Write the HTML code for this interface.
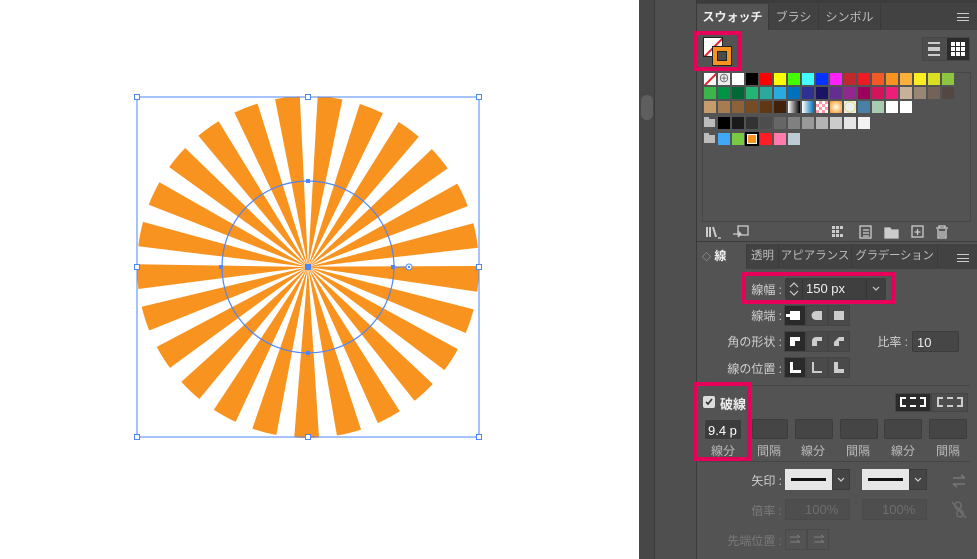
<!DOCTYPE html>
<html><head><meta charset="utf-8"><style>
*{margin:0;padding:0;box-sizing:border-box}
body{width:977px;height:559px;overflow:hidden;background:#fff;position:relative;font-family:"Liberation Sans","Noto Sans CJK JP",sans-serif;font-size:12px;color:#d6d6d6}
.a{position:absolute}
.sw{position:absolute;width:14px;height:14px;border:1px solid #535353}
.lbl{position:absolute;font-size:12px;color:#d0d0d0;text-align:right}
.btn{position:absolute;width:22px;height:21px;background:#4a4a4a;border:1px solid #454545}
.btn.on{background:#2a2a2a}
.in{position:absolute;background:#454545;border:1px solid #3c3c3c;border-radius:2px}
.pink{position:absolute;border:4px solid #e6005a}
.tab{position:absolute;height:24px;line-height:24px;font-size:11.5px;color:#bdbdbd;border-right:1px solid #3a3a3a;text-align:center;overflow:hidden;white-space:nowrap}
</style></head><body>
<svg class="a" style="left:0;top:0" width="640" height="559">
<circle cx="308" cy="267" r="85.5" fill="none" stroke="#f7931e" stroke-width="171" pathLength="25" stroke-dasharray="0.58 0.42"/>
<rect x="137" y="97" width="342" height="340" fill="none" stroke="#4f86f7" stroke-width="1"/>
<circle cx="308" cy="267" r="86" fill="none" stroke="#4f86f7" stroke-width="1.2"/>
<g fill="#fff" stroke="#4f86f7">
<rect x="134.5" y="94.5" width="5" height="5"/><rect x="305.5" y="94.5" width="5" height="5"/><rect x="476.5" y="94.5" width="5" height="5"/>
<rect x="134.5" y="264.5" width="5" height="5"/><rect x="476.5" y="264.5" width="5" height="5"/>
<rect x="134.5" y="434.5" width="5" height="5"/><rect x="305.5" y="434.5" width="5" height="5"/><rect x="476.5" y="434.5" width="5" height="5"/>
</g>
<g fill="#4f86f7"><rect x="306" y="179" width="4" height="4"/><rect x="306" y="351" width="4" height="4"/><rect x="219" y="265" width="4" height="4"/><rect x="391" y="265" width="4" height="4"/><rect x="305" y="264" width="6" height="6"/></g>
<line x1="395" y1="267" x2="406" y2="267" stroke="#4f86f7"/>
<circle cx="409" cy="267" r="3" fill="#fff" stroke="#4f86f7"/><circle cx="409" cy="267" r="1.2" fill="#4f86f7"/>
</svg>
<div class="a" style="left:639px;top:0;width:16px;height:559px;background:#474747;border-right:1px solid #393939"></div>
<div class="a" style="left:641px;top:95px;width:12px;height:25px;background:#5e5e5e;border-radius:6px"></div>
<div class="a" style="left:655px;top:0;width:42px;height:559px;background:#4f4f4f;border-right:1px solid #393939"></div>
<div class="a" style="left:697px;top:0;width:280px;height:559px;background:#535353"></div>
<div class="a" style="left:697px;top:0;width:280px;height:3px;background:#3c3c3c"></div>
<div class="a" style="left:697px;top:3px;width:280px;height:27px;background:#424242"></div>
<div class="tab" style="left:697px;top:4px;width:72px;height:26px;line-height:26px;background:#535353;color:#f0f0f0;font-weight:bold;font-size:12px">スウォッチ</div>
<div class="tab" style="left:769px;top:4px;width:50px;height:26px;line-height:26px;font-size:12px">ブラシ</div>
<div class="tab" style="left:819px;top:4px;width:62px;height:26px;line-height:26px;font-size:12px">シンボル</div>
<div class="a" style="left:957px;top:13px;width:12px;height:8px;border-top:1px solid #ccc;border-bottom:1px solid #ccc"><div style="margin-top:2.5px;border-top:1px solid #ccc"></div></div>
<div class="a" style="left:703px;top:37px;width:20px;height:20px;background:#fff;border:1px solid #222;overflow:hidden"><div style="position:absolute;left:-5px;top:8px;width:30px;height:2px;background:#e8202a;transform:rotate(-45deg)"></div></div>
<div class="a" style="left:712px;top:46px;width:20px;height:20px;background:#f7931e;border:1px solid #222"><div style="position:absolute;left:4px;top:4px;width:10px;height:10px;background:#4a4a4a;border:1px solid #222"></div></div>
<div class="pink" style="left:694px;top:31px;width:47px;height:40px"></div>
<div class="a" style="left:922px;top:37px;width:48px;height:24px;border:1px solid #464646;background:#4d4d4d"></div>
<div class="a" style="left:928px;top:42px;width:12px;height:14px;border-top:2px solid #ccc;border-bottom:2px solid #ccc"><div style="margin-top:3px;height:4px;border-top:2px solid #ccc;border-bottom:2px solid #ccc"></div></div>
<div class="a" style="left:947px;top:38px;width:22px;height:22px;background:#2b2b2b"></div>
<svg class="a" style="left:951px;top:42px" width="14" height="14" fill="#fff"><rect x="0" y="0" width="4" height="4"/><rect x="5" y="0" width="4" height="4"/><rect x="10" y="0" width="4" height="4"/><rect x="0" y="5" width="4" height="4"/><rect x="5" y="5" width="4" height="4"/><rect x="10" y="5" width="4" height="4"/><rect x="0" y="10" width="4" height="4"/><rect x="5" y="10" width="4" height="4"/><rect x="10" y="10" width="4" height="4"/></svg>
<div class="a" style="left:702px;top:72px;width:269px;height:150px;border:1px solid #474747"></div>
<div id="sw"></div>
<svg class="a" style="left:705px;top:224px" width="250" height="16" fill="none" stroke="#ccc" stroke-width="1.3">
<path d="M2 3v10M5 3v10M8 3l3 10" stroke-width="2"/><path d="M13 14h3" />
<rect x="33" y="2" width="10" height="9"/><path d="M28 10h8M33 7l3 3-3 3"/>
<g fill="#ccc" stroke="none"><rect x="127" y="2" width="3" height="3"/><rect x="131" y="2" width="3" height="3"/><rect x="135" y="2" width="3" height="3"/><rect x="127" y="6" width="3" height="3"/><rect x="131" y="6" width="3" height="3"/><rect x="127" y="10" width="3" height="3"/><rect x="131" y="10" width="3" height="3"/><rect x="135" y="10" width="3" height="3"/></g>
<rect x="155" y="2" width="11" height="12"/><path d="M158 6h6M158 9h6M158 12h6"/>
<path d="M180 4h5l1 2h7v8h-13z" fill="#ccc"/>
<rect x="207" y="2" width="11" height="11"/><path d="M212.5 5v6M209.5 8h6"/>
<path d="M231 4h12M234 4V2h6v2M233 5v9h8V5M235 7v6M237 7v6M239 7v6"/>
</svg>
<div class="a" style="left:697px;top:241px;width:280px;height:1px;background:#3c3c3c"></div>
<div class="a" style="left:697px;top:244px;width:280px;height:25px;background:#424242"></div>
<div class="tab" style="left:697px;top:244px;width:50px;height:25px;background:#535353;color:#f0f0f0;font-weight:bold;text-align:left;padding-left:5px;font-size:12px"><span style="font-size:9px;color:#aaa">◇</span> 線</div>
<div class="tab" style="left:747px;top:244px;width:32px">透明</div>
<div class="tab" style="left:779px;top:244px;width:73px">アピアランス</div>
<div class="tab" style="left:852px;top:244px;width:86px;letter-spacing:-0.3px">グラデーション</div>
<div class="a" style="left:957px;top:254px;width:12px;height:8px;border-top:1px solid #ccc;border-bottom:1px solid #ccc"><div style="margin-top:2.5px;border-top:1px solid #ccc"></div></div>
<div class="lbl" style="left:740px;top:281px;width:42px">線幅 :</div>
<div class="in" style="left:785px;top:278px;width:101px;height:22px;background:#3f3f3f"></div>
<div class="a" style="left:802px;top:279px;width:1px;height:20px;background:#353535"></div>
<div class="a" style="left:866px;top:279px;width:1px;height:20px;background:#353535"></div>
<svg class="a" style="left:787px;top:280px" width="14" height="18" fill="none" stroke="#ccc" stroke-width="1.2"><path d="M3 7l4-4 4 4M3 11l4 4 4-4"/></svg>
<div class="a" style="left:806px;top:281px;font-size:13px;color:#f0f0f0">150 px</div>
<svg class="a" style="left:869px;top:283px" width="14" height="12" fill="none" stroke="#ccc" stroke-width="1.2"><path d="M4 4l3 3 3-3"/></svg>
<div class="pink" style="left:742px;top:272px;width:153px;height:32px"></div>
<div class="lbl" style="left:720px;top:307px;width:62px">線端 :</div>
<div class="btn on" style="left:784px;top:305px"></div><div class="btn" style="left:806px;top:305px"></div><div class="btn" style="left:828px;top:305px"></div>
<div class="lbl" style="left:700px;top:333px;width:82px">角の形状 :</div>
<div class="btn on" style="left:784px;top:331px"></div><div class="btn" style="left:806px;top:331px"></div><div class="btn" style="left:828px;top:331px"></div>
<div class="lbl" style="left:700px;top:360px;width:82px">線の位置 :</div>
<div class="btn on" style="left:784px;top:357px"></div><div class="btn" style="left:806px;top:357px"></div><div class="btn" style="left:828px;top:357px"></div>
<svg class="a" style="left:784px;top:305px" width="66" height="75" fill="#fff">
<path d="M6 6h10v9H6z M2 9h6v3H2z"/><path d="M32 6h6v9h-6a4.5 4.5 0 0 1 0-9z" fill="#ccc"/><rect x="50" y="6" width="10" height="9" fill="#ccc"/>
<path d="M6 32h10v4h-5v5h-5z"/><path d="M28 36a4 4 0 0 1 4-4h6v4h-5v5h-5z" fill="#ccc"/><path d="M50 37l5-5h5v4h-5v5h-5z" fill="#ccc"/>
<path d="M6 57h3v8h8v3H6z"/><path d="M28 57h2v9h8v2H28z" fill="#ccc"/><path d="M50 57h4v7h6v4H50z" fill="#ccc"/>
</svg>
<div class="lbl" style="left:860px;top:333px;width:48px">比率 :</div>
<div class="in" style="left:912px;top:331px;width:47px;height:21px;background:#464646"></div>
<div class="a" style="left:917px;top:335px;font-size:13px;color:#eee">10</div>
<div class="a" style="left:700px;top:385px;width:270px;height:1px;background:#464646"></div>
<div class="a" style="left:703px;top:396px;width:12px;height:12px;background:#ddd;border-radius:2px"></div>
<svg class="a" style="left:703px;top:396px" width="12" height="12" fill="none" stroke="#333" stroke-width="1.6"><path d="M3 6l2 2 4-5"/></svg>
<div class="a" style="left:720px;top:394px;font-size:13px;color:#eee;font-weight:bold">破線</div>
<div class="a" style="left:895px;top:393px;width:36px;height:19px;background:#2b2b2b;border:1px solid #444"></div>
<div class="a" style="left:931px;top:393px;width:37px;height:19px;background:#4d4d4d;border:1px solid #444"></div>
<div class="a" style="left:900px;top:397px;width:26px;height:10px;border:2px dashed #fff"></div>
<div class="a" style="left:937px;top:397px;width:26px;height:10px;border:2px dashed #ccc"></div>
<div class="in" style="left:704px;top:419px;width:38px;height:21px;background:#3c3c3c;border-color:#555"></div>
<div class="a" style="left:708px;top:423px;font-size:13px;color:#fff">9.4 p</div>
<div class="in" style="left:752px;top:419px;width:36px;height:20px"></div>
<div class="in" style="left:795px;top:419px;width:38px;height:20px"></div>
<div class="in" style="left:840px;top:419px;width:38px;height:20px"></div>
<div class="in" style="left:884px;top:419px;width:38px;height:20px"></div>
<div class="in" style="left:929px;top:419px;width:38px;height:20px"></div>
<div class="a" style="left:711px;top:442px;color:#bbb">線分</div>
<div class="a" style="left:757px;top:442px;color:#bbb">間隔</div>
<div class="a" style="left:801px;top:442px;color:#bbb">線分</div>
<div class="a" style="left:846px;top:442px;color:#bbb">間隔</div>
<div class="a" style="left:891px;top:442px;color:#bbb">線分</div>
<div class="a" style="left:936px;top:442px;color:#bbb">間隔</div>
<div class="pink" style="left:693px;top:382px;width:58px;height:79px"></div>
<div class="a" style="left:696px;top:461px;width:1px;height:98px;background:#3e3e3e"></div>
<div class="a" style="left:700px;top:461px;width:270px;height:1px;background:#464646"></div>
<div class="lbl" style="left:720px;top:472px;width:62px">矢印 :</div>
<div class="a" style="left:785px;top:469px;width:47px;height:21px;background:#e6e6e6"></div>
<div class="a" style="left:791px;top:478px;width:35px;height:3px;background:#111"></div>
<div class="a" style="left:832px;top:469px;width:18px;height:21px;background:#454545;border:1px solid #3c3c3c"></div>
<div class="a" style="left:862px;top:469px;width:47px;height:21px;background:#e6e6e6"></div>
<div class="a" style="left:868px;top:478px;width:35px;height:3px;background:#111"></div>
<div class="a" style="left:909px;top:469px;width:18px;height:21px;background:#454545;border:1px solid #3c3c3c"></div>
<svg class="a" style="left:832px;top:469px" width="100" height="21" fill="none" stroke="#ccc" stroke-width="1.2"><path d="M6 9l3 3 3-3M83 9l3 3 3-3"/></svg>
<svg class="a" style="left:950px;top:472px" width="18" height="18" fill="none" stroke="#777" stroke-width="1.5"><path d="M3 6h12M11 3l4 3M15 12H3M7 15l-4-3"/></svg>
<div class="lbl" style="left:720px;top:502px;width:62px;color:#7a7a7a">倍率 :</div>
<div class="in" style="left:785px;top:499px;width:65px;height:21px;background:#4e4e4e;border-color:#4a4a4a"></div>
<div class="a" style="left:805px;top:502px;color:#6e6e6e;font-size:13px">100%</div>
<div class="in" style="left:862px;top:499px;width:65px;height:21px;background:#4e4e4e;border-color:#4a4a4a"></div>
<div class="a" style="left:882px;top:502px;color:#6e6e6e;font-size:13px">100%</div>
<svg class="a" style="left:950px;top:500px" width="18" height="20" fill="none" stroke="#6e6e6e" stroke-width="1.5"><rect x="5" y="2" width="6" height="7" rx="3"/><rect x="7" y="10" width="6" height="7" rx="3"/><path d="M2 2l14 16"/></svg>
<div class="lbl" style="left:700px;top:532px;width:82px;color:#7a7a7a">先端位置 :</div>
<div class="a" style="left:785px;top:529px;width:22px;height:21px;border:1px solid #4a4a4a"></div>
<div class="a" style="left:807px;top:529px;width:22px;height:21px;border:1px solid #4a4a4a"></div>
<svg class="a" style="left:785px;top:529px" width="44" height="21" fill="none" stroke="#777" stroke-width="1.3"><path d="M5 8h10M12 6l3 2M5 13h10M12 11l3 2M29 8h10M36 6l3 2M29 13h10M36 11l3 2"/></svg>
<script>
var rows=[
[null,'reg','#fff','#000','#f00','#ff0','#4f0','#4ff','#03f','#f2f','#c1272d','#ed1c24','#f15a24','#f7931e','#fbb03b','#fcee21','#d9e021','#8cc63f'],
['#39b54a','#009245','#006837','#22b573','#2aa99d','#29abe2','#0071bc','#2e3192','#1b1464','#662d91','#93278f','#9e005d','#d4145a','#ed1e79','#c7b299','#998675','#736357','#534741'],
['#c69c6d','#a67c52','#8c6239','#754c24','#603813','#42210b','linear-gradient(90deg,#fff,#000)','linear-gradient(90deg,#fff,#0071bc)','repeating-conic-gradient(#f9a 0 25%,#fff 0 50%) 0 0/6px 6px','radial-gradient(#ffe,#f7931e)','radial-gradient(circle,#eee 55%,#dc3 60%,#eee 70%)','#4a7fa8','#a9c9b0','#fff','#fff']];
var tops=[72,86,100],h='';
rows.forEach(function(r,j){r.forEach(function(c,i){var x=703+14*i,y=tops[j];
if(c===null)h+='<div class="sw" style="left:'+x+'px;top:'+y+'px;background:#fff;overflow:hidden"><div style="position:absolute;left:-3px;top:5px;width:20px;height:2px;background:#e8202a;transform:rotate(-45deg)"></div></div>';
else if(c==='reg')h+='<div class="sw" style="left:'+x+'px;top:'+y+'px;background:#eee;text-align:center;font-size:11px;line-height:12px;color:#555">⊕</div>';
else h+='<div class="sw" style="left:'+x+'px;top:'+y+'px;background:'+c+'"></div>';});});
var g=['#000','#1a1a1a','#333','#4d4d4d','#666','#808080','#999','#b3b3b3','#ccc','#e6e6e6','#f2f2f2'];
g.forEach(function(c,i){h+='<div class="sw" style="left:'+(717+14*i)+'px;top:116px;background:'+c+'"></div>'});
var u=['#3fa9f5','#7ac943','#f7931e','#ff1d25','#ff7bac','#bdccd4'];
u.forEach(function(c,i){h+='<div class="sw" style="left:'+(717+14*i)+'px;top:132px;background:'+c+(i==2?';border:2px solid #000;outline:1px solid #fff;outline-offset:-3px':'')+'"></div>'});
[119,135].forEach(function(y){h+='<div class="a" style="left:704px;top:'+y+'px;width:11px;height:8px;background:#bbb"></div><div class="a" style="left:704px;top:'+(y-2)+'px;width:5px;height:3px;background:#bbb"></div>'});
document.getElementById('sw').innerHTML=h;
</script>
</body></html>
